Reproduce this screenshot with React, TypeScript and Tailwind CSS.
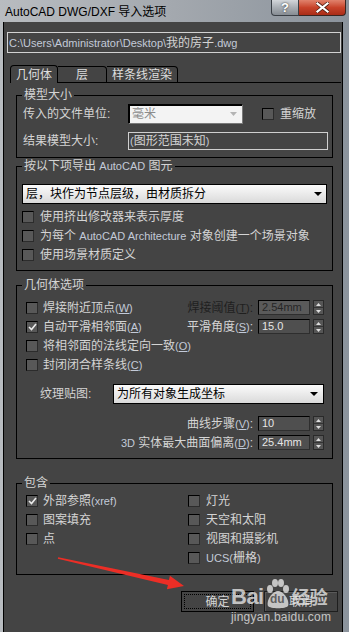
import React from "react";

function Latin({ children, dark }: { children: React.ReactNode; dark?: boolean }) {
  return <span className={`text-[11px] ${dark ? "text-[#1f1f1f]" : "text-[#c3cad8]"}`}>{children}</span>;
}

function Key({ k, dark }: { k: string; dark?: boolean }) {
  return (
    <Latin dark={dark}>
      (<span className="underline underline-offset-1">{k}</span>)
    </Latin>
  );
}

function Check({ checked }: { checked?: boolean }) {
  return (
    <span className="w-[12px] h-[12px] shrink-0 flex items-center justify-center bg-[#585858] border border-t-black border-l-black border-r-[#2c2c2c] border-b-[#2c2c2c]">
      {checked && (
        <svg width="9" height="8" viewBox="0 0 9 8">
          <path d="M1 4 L3.5 6.5 L8 1" stroke="#ececec" strokeWidth="1.6" fill="none" />
        </svg>
      )}
    </span>
  );
}

function CheckRow({ children, checked, gap = "gap-[5px]" }: { children: React.ReactNode; checked?: boolean; gap?: string }) {
  return (
    <div className={`h-[19px] flex items-center ${gap}`}>
      <Check checked={checked} />
      <span className="whitespace-nowrap">{children}</span>
    </div>
  );
}

function Spinner({ value, disabled }: { value: string; disabled?: boolean }) {
  return (
    <div className="flex items-center gap-[3px]">
      <div
        className={`w-[52px] h-[15px] pl-[3px] text-[11px] leading-[13px] border border-t-black border-l-black border-r-[#2e2e2e] border-b-[#2e2e2e] ${
          disabled ? "bg-[#5a5a5a] text-[#262626]" : "bg-[#4f4f4f] text-[#e6e6e6]"
        }`}
      >
        {value}
      </div>
      <div className="w-[11px] h-[15px] flex flex-col bg-[#565656] border border-[#2a2a2a]">
        <div className="flex-1 flex items-center justify-center border-b border-[#333]">
          <svg width="5" height="3" viewBox="0 0 5 3">
            <path d="M0 3 L2.5 0 L5 3z" fill="#dedede" />
          </svg>
        </div>
        <div className="flex-1 flex items-center justify-center">
          <svg width="5" height="3" viewBox="0 0 5 3">
            <path d="M0 0 L2.5 3 L5 0z" fill="#dedede" />
          </svg>
        </div>
      </div>
    </div>
  );
}

function Group({ title, className, children }: { title: React.ReactNode; className?: string; children: React.ReactNode }) {
  return (
    <div className={`border border-black ${className ?? ""}`}>
      <div className="-mt-[8px] ml-[5px] w-fit h-[14px] leading-[14px] px-[2px] bg-[#444] whitespace-nowrap">{title}</div>
      {children}
    </div>
  );
}

function Watermark() {
  return (
    <div className="absolute left-[231px] top-[579px] pointer-events-none text-[#e6e6e6]/80 font-['Liberation_Sans','Noto_Sans_CJK_SC',sans-serif]">
      <div className="flex items-end h-[30px]">
        <span className="text-[22px] font-bold leading-[24px] tracking-[-0.5px]">Bai</span>
        <span className="relative w-[27px] h-[30px] flex items-end justify-center">
          <svg className="absolute left-0 top-0" width="27" height="30" viewBox="0 0 27 30">
            <ellipse cx="6" cy="10" rx="3" ry="4" fill="currentColor" />
            <ellipse cx="11" cy="4" rx="3" ry="4" fill="currentColor" />
            <ellipse cx="17" cy="4" rx="3" ry="4" fill="currentColor" />
            <ellipse cx="22" cy="10" rx="3" ry="4" fill="currentColor" />
            <path d="M14 12 C20 12 26 22 24 27 C22 30 6 30 4 27 C2 22 8 12 14 12z" fill="currentColor" />
          </svg>
          <span className="relative text-[12px] font-bold leading-[14px] mb-[3px] text-[#444]/80">du</span>
        </span>
        <span className="text-[18px] font-bold leading-[22px] ml-[1px]">经验</span>
      </div>
      <div className="text-[12px] leading-[14px] mt-[1px] tracking-[0.2px]">jingyan.baidu.com</div>
    </div>
  );
}

export default function App() {
  return (
    <div className="relative w-[349px] h-[632px] overflow-hidden bg-gradient-to-r from-[#b8bcc0] via-[#a3a8ae] to-[#8b939c] font-['Liberation_Sans','Noto_Sans_CJK_SC',sans-serif] text-[12px] leading-[14px] text-[#d4d4d4]">
      {/* title bar */}
      <div className="h-[22px] flex items-start">
        <div className="pl-[5px] pt-[5px] text-black whitespace-nowrap">AutoCAD DWG/DXF 导入选项</div>
        <div className="ml-auto mr-[3px] flex h-[16px]">
          <div className="w-[28px] h-full flex items-center justify-center rounded-bl-[4px] border border-t-0 border-[#3a3f46] bg-gradient-to-b from-[#d3d6da] via-[#a9aeb4] to-[#868c93] text-white font-bold text-[13px] [text-shadow:0_0_2px_#222]">
            ?
          </div>
          <div className="w-[47px] h-full flex items-center justify-center rounded-br-[4px] border border-t-0 border-l-0 border-[#3a2520] bg-gradient-to-b from-[#e0826c] via-[#c8432a] to-[#a92c17]">
            <svg width="13" height="11" viewBox="0 0 13 11">
              <path d="M1.5 1.5 L11.5 9.5 M11.5 1.5 L1.5 9.5" stroke="#4a1a10" strokeWidth="3.6" strokeLinecap="square" />
              <path d="M1.5 1.5 L11.5 9.5 M11.5 1.5 L1.5 9.5" stroke="#fff" strokeWidth="2.2" strokeLinecap="square" />
            </svg>
          </div>
        </div>
      </div>

      {/* client */}
      <div className="ml-[3px] w-[340px] h-[610px] bg-[#444] border-x border-black flex flex-col">
        <div className="mt-[10px] ml-[3px] w-[334px] h-[21px] border border-[#d2d2d2] flex items-center pl-[1px] whitespace-nowrap">
          <Latin>C:\Users\Administrator\Desktop\</Latin>
          <span>我的房子</span>
          <Latin>.dwg</Latin>
        </div>

        {/* tabs */}
        <div className="mt-[12px] ml-[6px] mr-[1px] h-[18px] flex items-end">
          <div className="w-[48px] h-[18px] border border-b-0 border-black rounded-t-[4px] flex items-center justify-center text-[#dedede]">
            几何体
          </div>
          <div className="w-[49px] h-[17px] border border-l-0 border-black rounded-tr-[4px] flex items-center justify-center text-[#dedede]">
            层
          </div>
          <div className="w-[71px] h-[17px] border border-l-0 border-black rounded-tr-[4px] flex items-center justify-center text-[#dedede]">
            样条线渲染
          </div>
          <div className="flex-1 border-b border-black" />
        </div>

        {/* panel */}
        <div className="ml-[12px] w-[317px] flex flex-col">
          <Group title="模型大小" className="mt-[12px] pb-[7px]">
            <div className="mt-[2px] h-[20px] flex items-center pl-[6px]">
              <span className="w-[105px] whitespace-nowrap">传入的文件单位:</span>
              <div className="w-[115px] h-[20px] flex items-center justify-between pl-[3px] pr-[5px] bg-[#f3f3f3] border border-black border-r-[#7a7a7a] border-b-[#7a7a7a] shadow-[inset_1px_1px_0_#000] text-[#8c8c8c]">
                <span>毫米</span>
                <svg width="7" height="4" viewBox="0 0 7 4">
                  <path d="M0 0 L3.5 4 L7 0z" fill="#b4b4b4" />
                </svg>
              </div>
              <div className="ml-[19px] flex items-center gap-[6px]">
                <Check />
                <span>重缩放</span>
              </div>
            </div>
            <div className="mt-[8px] h-[18px] flex items-center pl-[6px]">
              <span className="w-[105px] whitespace-nowrap">结果模型大小:</span>
              <div className="w-[200px] h-[18px] border border-[#cfcfcf] flex items-center pl-[1px] whitespace-nowrap">
                <Latin>(</Latin>图形范围未知<Latin>)</Latin>
              </div>
            </div>
          </Group>

          <Group
            title={
              <>
                按以下项导出 <Latin>AutoCAD</Latin> 图元
              </>
            }
            className="mt-[8px] pb-[6px]"
          >
            <div className="mt-[11px] ml-[5px] w-[305px] h-[20px] flex items-center justify-between pl-[3px] pr-[4px] bg-gradient-to-b from-[#fbfbfb] to-[#dadada] border border-black text-black">
              <span className="whitespace-nowrap">层，块作为节点层级，由材质拆分</span>
              <svg width="8" height="4" viewBox="0 0 8 4">
                <path d="M0 0 L4 4 L8 0z" fill="#000" />
              </svg>
            </div>
            <div className="mt-[3px] pl-[5px]">
              <CheckRow gap="gap-[6px]">使用挤出修改器来表示厚度</CheckRow>
              <CheckRow gap="gap-[6px]">
                为每个 <Latin>AutoCAD Architecture</Latin> 对象创建一个场景对象
              </CheckRow>
              <CheckRow gap="gap-[6px]">使用场景材质定义</CheckRow>
            </div>
          </Group>

          <Group title="几何体选项" className="mt-[14px] pb-[6px]">
            <div className="mt-[6px] pl-[9px] pr-[8px]">
              <div className="flex items-center justify-between">
                <CheckRow>
                  焊接附近顶点<Key k="W" />
                </CheckRow>
                <div className="flex items-center gap-[5px] text-[#1f1f1f]">
                  <span>
                    焊接阈值<Key k="T" dark />:
                  </span>
                  <Spinner value="2.54mm" disabled />
                </div>
              </div>
              <div className="flex items-center justify-between">
                <CheckRow checked>
                  自动平滑相邻面<Key k="A" />
                </CheckRow>
                <div className="flex items-center gap-[5px]">
                  <span>
                    平滑角度<Key k="S" />:
                  </span>
                  <Spinner value="15.0" />
                </div>
              </div>
              <CheckRow>
                将相邻面的法线定向一致<Key k="O" />
              </CheckRow>
              <CheckRow>
                封闭闭合样条线<Key k="C" />
              </CheckRow>
            </div>
            <div className="mt-[10px] pl-[23px] flex items-center h-[20px]">
              <span className="w-[73px]">纹理贴图:</span>
              <div className="w-[211px] h-[20px] flex items-center justify-between pl-[3px] pr-[5px] bg-gradient-to-b from-[#fbfbfb] to-[#dadada] border border-black text-black">
                <span>为所有对象生成坐标</span>
                <svg width="8" height="4" viewBox="0 0 8 4">
                  <path d="M0 0 L4 4 L8 0z" fill="#000" />
                </svg>
              </div>
            </div>
            <div className="mt-[10px] pr-[8px] flex flex-col items-end">
              <div className="h-[19px] flex items-center gap-[5px]">
                <span>
                  曲线步骤<Key k="V" />:
                </span>
                <Spinner value="10" />
              </div>
              <div className="h-[19px] flex items-center gap-[5px]">
                <span>
                  <Latin>3D</Latin> 实体最大曲面偏离<Key k="D" />:
                </span>
                <Spinner value="25.4mm" />
              </div>
            </div>
          </Group>

          <Group title="包含" className="mt-[24px] pb-[7px]">
            <div className="mt-[1px] pl-[9px] flex">
              <div className="w-[162px]">
                <CheckRow checked>
                  外部参照<Latin>(xref)</Latin>
                </CheckRow>
                <CheckRow>图案填充</CheckRow>
                <CheckRow>点</CheckRow>
              </div>
              <div>
                <CheckRow gap="gap-[6px]">灯光</CheckRow>
                <CheckRow gap="gap-[6px]">天空和太阳</CheckRow>
                <CheckRow gap="gap-[6px]">视图和摄影机</CheckRow>
                <CheckRow gap="gap-[6px]">
                  <Latin>UCS(</Latin>栅格<Latin>)</Latin>
                </CheckRow>
              </div>
            </div>
          </Group>
        </div>

        {/* buttons */}
        <div className="mt-[16px] mr-[4px] flex justify-end gap-[10px]">
          <div className="w-[73px] h-[21px] border border-black p-[2px]">
            <div className="w-full h-full border border-dotted border-black flex items-center justify-center">确定</div>
          </div>
          <div className="w-[74px] h-[21px] border border-[#1e1e1e] shadow-[inset_1px_1px_0_#5a5a5a] flex items-center justify-center">
            取消
          </div>
        </div>
      </div>

      {/* annotation arrow */}
      <svg className="absolute left-0 top-0 pointer-events-none" width="349" height="632" viewBox="0 0 349 632">
        <polygon
          points="58.2,557.2 168.9,580.1 169.9,575.7 184,586 166.9,589.3 167.9,584.9 57.8,558.8"
          fill="#ec2e26"
        />
      </svg>

      <Watermark />
    </div>
  );
}
